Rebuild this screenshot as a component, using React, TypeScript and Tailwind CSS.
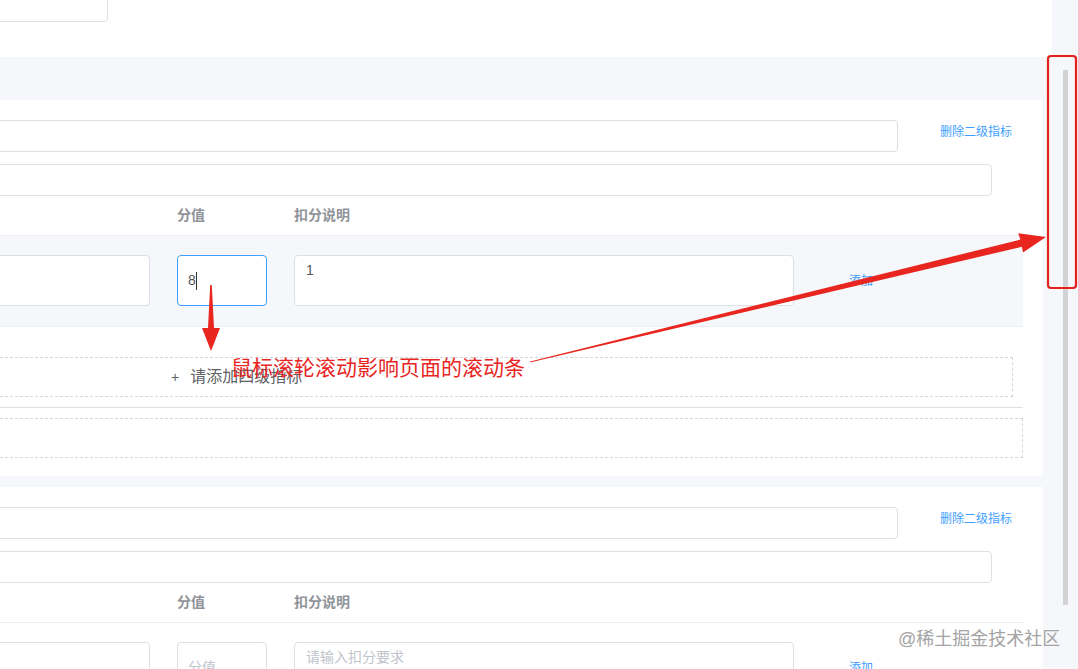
import React from "react";

function Input({ className = "" }: { className?: string }) {
  return <div className={"border border-[#dcdfe6] rounded-[4px] bg-white " + className} />;
}

function Section({ hovered, filled }: { hovered: boolean; filled: boolean }) {
  return (
    <div className="pt-[20px] pr-[20px]">
      <div className="flex items-center h-[32px]">
        <Input className="flex-1 -ml-[10px] h-[32px]" />
        <div className="w-[125px] pl-[42px] mb-[9px] text-[12px] text-[#409eff] leading-none">删除二级指标</div>
      </div>
      <div className="flex items-center h-[32px] mt-[12px]">
        <Input className="flex-1 -ml-[10px] h-[32px]" />
        <div className="w-[31px]" />
      </div>
      <div className="h-[40px] border-b border-[#ebeef5] flex items-center text-[14px] font-bold text-[#909399]">
        <div className="w-[177px] shrink-0" />
        <div className="w-[117px] shrink-0">分值</div>
        <div>扣分说明</div>
      </div>
      <div
        className={
          "h-[91px] pt-[19px] flex items-start border-b border-[#ebeef5] " +
          (hovered ? "bg-[#f5f7fa]" : "bg-white")
        }
      >
        <Input className="w-[160px] -ml-[10px] h-[51px] shrink-0" />
        {filled ? (
          <div className="ml-[27px] w-[90px] h-[51px] shrink-0 border border-[#409eff] rounded-[4px] bg-white flex items-center pl-[10px] text-[14px] text-[#555]">
            8<span className="inline-block w-px h-[18px] bg-[#333]" />
          </div>
        ) : (
          <div className="ml-[27px] w-[90px] h-[51px] shrink-0 border border-[#dcdfe6] rounded-[4px] bg-white flex items-center pl-[10px] text-[14px] text-[#c0c4cc]">
            分值
          </div>
        )}
        <div
          className={
            "ml-[27px] w-[500px] h-[51px] shrink-0 border border-[#dcdfe6] rounded-[4px] bg-white px-[11px] py-[4px] text-[14px] leading-[20px] " +
            (filled ? "text-[#555]" : "text-[#c0c4cc]")
          }
        >
          {filled ? "1" : "请输入扣分要求"}
        </div>
        <div className="ml-[55px] mt-[17px] text-[12px] text-[#409eff]">添加</div>
      </div>
      {filled && (
        <>
          <div className="mt-[30px] -ml-[10px] mr-[10px] h-[40px] border border-dashed border-[#d4d7de] flex items-center pl-[180px] text-[16px] text-[#606266]">
            <span className="mr-[11px] text-[14px]">+</span>请添加四级指标
          </div>
          <div className="mt-[10px] h-px bg-[#dcdfe6]" />
          <div className="mt-[10px] -ml-[10px] h-[40px] border border-dashed border-[#d4d7de]" />
        </>
      )}
    </div>
  );
}

export default function App() {
  return (
    <div className="relative w-[1078px] h-[669px] overflow-hidden bg-[#f5f7fa] flex font-['Liberation_Sans','Noto_Sans_CJK_SC',sans-serif]">
      <div className="w-[1052px] shrink-0 flex flex-col">
        <div className="h-[57px] shrink-0 bg-white overflow-hidden">
          <Input className="-mt-[10px] -ml-[10px] w-[118px] h-[32px]" />
        </div>
        <div className="h-[43px] shrink-0" />
        <div className="w-[1043px] h-[376px] shrink-0 bg-white overflow-hidden">
          <Section hovered filled />
        </div>
        <div className="h-[11px] shrink-0" />
        <div className="w-[1043px] flex-1 bg-white overflow-hidden">
          <Section hovered={false} filled={false} />
        </div>
      </div>
      <div className="flex-1">
        <div className="mt-[70px] ml-[11px] w-[5px] h-[535px] bg-[#d3d3d3]" />
      </div>

      {/* annotations */}
      <svg className="absolute inset-0 pointer-events-none" width="1078" height="669" viewBox="0 0 1078 669">
        <polygon points="210.2,285 211.8,285 214,328 220,328 211,351 202,328 208,328" fill="#e8261f" />
        <polygon
          points="530.1,361.5 529.9,362.5 1021.8,246.8 1023,252.6 1046,237 1018.2,233.2 1020.4,239.6"
          fill="#e8261f"
        />
        <rect x="1048" y="56" width="28" height="232" rx="3" fill="none" stroke="#e3221c" strokeWidth="2.2" />
      </svg>
      <div className="absolute left-[231px] top-[354px] text-[21px] leading-[28px] text-[#e8261f] whitespace-nowrap">
        鼠标滚轮滚动影响页面的滚动条
      </div>
      <div className="absolute left-[898px] top-[627px] text-[18px] leading-[24px] text-[#a3a3a3] whitespace-nowrap [text-shadow:0_0_2px_#fff]">
        @稀土掘金技术社区
      </div>
    </div>
  );
}
